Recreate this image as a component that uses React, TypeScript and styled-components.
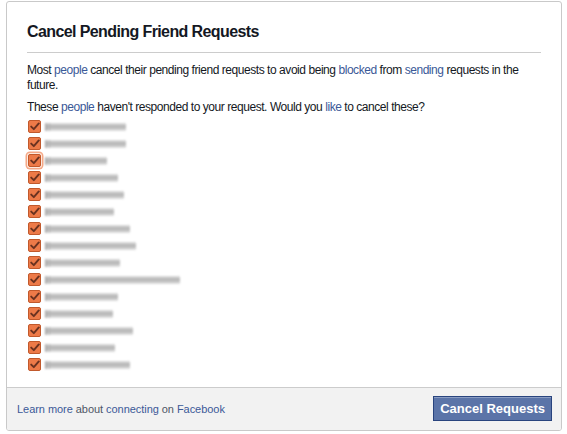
import React from "react";
import styled, { createGlobalStyle } from "styled-components";

const Global = createGlobalStyle`
  html, body { margin: 0; padding: 0; background: #fff; }
  body { font-family: "Liberation Sans", Arial, Helvetica, sans-serif; color: #333; }
`;

const Page = styled.div`
  padding: 1px 5px 4px 6px;
`;

const Dialog = styled.div`
  width: 554px;
  border: 1px solid #c9c9c9;
  border-radius: 3px;
  background: #fff;
  display: flex;
  flex-direction: column;
  overflow: hidden;
`;

const Content = styled.div`
  padding: 20px 20px 14px 20px;
`;

const Title = styled.h2`
  margin: 0;
  padding: 0 0 10px;
  font-size: 16px;
  line-height: 20px;
  font-weight: bold;
  letter-spacing: -0.6px;
  color: #141823;
  border-bottom: 1px solid #ccc;
`;

const Para = styled.p<{ $gap?: number }>`
  margin: ${(p) => p.$gap ?? 0}px 0 0;
  font-size: 12px;
  line-height: 15px;
  letter-spacing: -0.45px;
  color: #141823;
`;

const A = styled.span`
  color: #3b5998;
`;

const List = styled.div`
  margin-top: 3px;
  display: flex;
  flex-direction: column;
`;

const Row = styled.div`
  height: 17px;
  display: flex;
  align-items: center;
  gap: 4px;
  padding-left: 1px;
`;

const Box = styled.span<{ $focus?: boolean }>`
  width: 11px;
  height: 11px;
  border: 1px solid #c1592c;
  border-radius: 2px;
  background: #ed7a48;
  display: inline-flex;
  align-items: center;
  justify-content: center;
  box-shadow: ${(p) => (p.$focus ? "0 0 0 1px #fde9df, 0 0 0 2.5px #f5a886" : "none")};
  flex: none;
`;

const Name = styled.span`
  display: block;
  height: 8px;
  border-radius: 1px;
  background: linear-gradient(90deg, #9a9a9a 0 2px, transparent 2px 4px, #a0a0a0 4px 5px, transparent 5px),
    linear-gradient(180deg, #dcdcdc, #a6a6a6 45%, #bdbdbd 70%, #e0e0e0);
  filter: blur(0.9px);
  opacity: 0.85;
`;

const Footer = styled.div`
  border-top: 1px solid #ccc;
  background: #f2f2f2;
  height: 42px;
  display: flex;
  align-items: center;
  justify-content: space-between;
  padding: 0 9px 0 10px;
`;

const FootText = styled.span`
  font-size: 11px;
  letter-spacing: -0.05px;
  color: #4e5665;
`;

const Button = styled.button`
  font-family: "Liberation Sans", Arial, Helvetica, sans-serif;
  font-size: 13px;
  font-weight: bold;
  color: #fff;
  background: #5b74a8;
  border: 1px solid #29447e;
  height: 25px;
  padding: 0 6px;
  margin-top: -2px;
  box-shadow: inset 0 1px 0 #8a9cc2;
  cursor: pointer;
`;

const Check = () => (
  <svg width="10" height="9" viewBox="0 0 10 9">
    <path d="M1.2 4.6 L3.8 7.2 L8.8 1.4" fill="none" stroke="#6a3220" strokeWidth="1.9" strokeLinecap="round" strokeLinejoin="round" />
  </svg>
);

const names = [81, 81, 62, 73, 79, 69, 85, 91, 75, 135, 73, 68, 88, 70, 85];

export default function App() {
  return (
    <Page>
      <Global />
      <Dialog>
        <Content>
          <Title>Cancel Pending Friend Requests</Title>
          <Para $gap={10}>
            Most <A>people</A> cancel their pending friend requests to avoid being <A>blocked</A> from{" "}
            <A>sending</A> requests in the future.
          </Para>
          <Para $gap={7}>
            These <A>people</A> haven't responded to your request. Would you <A>like</A> to cancel these?
          </Para>
          <List>
            {names.map((w, i) => (
              <Row key={i}>
                <Box $focus={i === 2}>
                  <Check />
                </Box>
                <Name style={{ width: w }} />
              </Row>
            ))}
          </List>
        </Content>
        <Footer>
          <FootText>
            <A>Learn more</A> about <A>connecting</A> on <A>Facebook</A>
          </FootText>
          <Button>Cancel Requests</Button>
        </Footer>
      </Dialog>
    </Page>
  );
}
